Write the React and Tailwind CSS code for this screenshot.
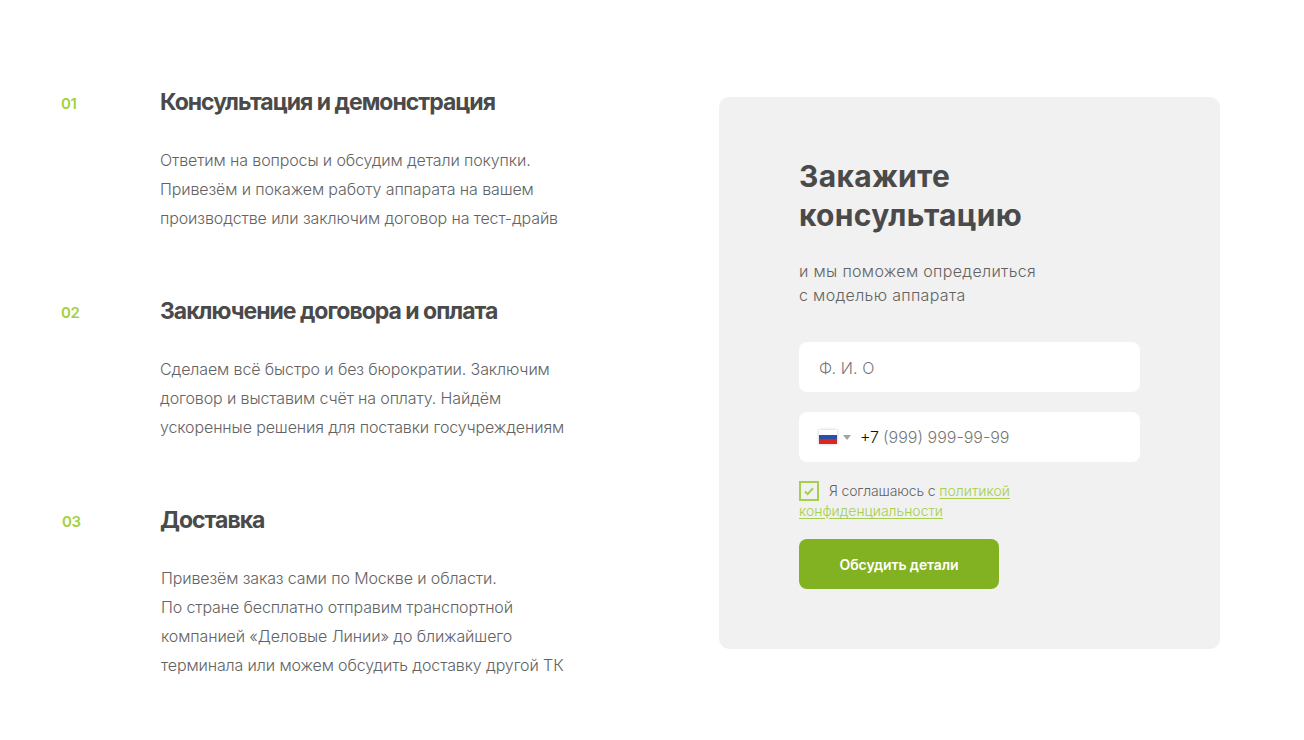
const STEPS = [
  {
    num: '01',
    numClass: 'w-[100px] pl-px',
    bodyClass: '',
    title: 'Консультация и демонстрация',
    lines: [
      'Ответим на вопросы и обсудим детали покупки.',
      'Привезём и покажем работу аппарата на вашем',
      'производстве или заключим договор на тест-драйв',
    ],
  },
  {
    num: '02',
    numClass: 'w-[100px] pl-px',
    bodyClass: '',
    title: 'Заключение договора и оплата',
    lines: [
      'Сделаем всё быстро и без бюрократии. Заключим',
      'договор и выставим счёт на оплату. Найдём',
      'ускоренные решения для поставки госучреждениям',
    ],
  },
  {
    num: '03',
    numClass: 'w-[100px] pl-[2px]',
    bodyClass: 'pl-px',
    title: 'Доставка',
    lines: [
      'Привезём заказ сами по Москве и области.',
      'По стране бесплатно отправим транспортной',
      'компанией «Деловые Линии» до ближайшего',
      'терминала или можем обсудить доставку другой ТК',
    ],
  },
];

function Step({ step }) {
  return (
    <div className="flex h-[209px]">
      <div className={`${step.numClass} shrink-0 pt-[6px] text-[15px] leading-[20px] font-semibold tracking-[-0.4px] text-[#a5d03d]`}>
        {step.num}
      </div>
      <div>
        <h3 className="text-[23px] leading-[28px] font-bold tracking-[-1px] text-[#4a4a4a]">{step.title}</h3>
        <div className={`${step.bodyClass} mt-[30px] text-[16px] leading-[29px] font-light tracking-[-0.12px] text-[#636363]`}>
          {step.lines.map(line => (
            <p key={line} className="whitespace-nowrap">{line}</p>
          ))}
        </div>
      </div>
    </div>
  );
}

function RuFlag() {
  return (
    <span className="flex h-[14px] w-[18px] flex-col shadow-[0_0_3px_rgba(0,0,0,0.25)]">
      <span className="h-[5px] bg-white" />
      <span className="h-[4px] bg-[#2a4fa8]" />
      <span className="h-[5px] bg-[#d8281f]" />
    </span>
  );
}

export default function App() {
  return (
    <div className="flex h-[740px] w-[1304px] items-start overflow-hidden bg-white pt-[88px] pl-[60px] font-['Inter',sans-serif]">
      <div className="w-[659px] shrink-0">
        {STEPS.map(s => (
          <Step key={s.num} step={s} />
        ))}
      </div>

      <div className="mt-[9px] h-[552px] w-[501px] shrink-0 rounded-[10px] bg-[#f1f1f1] px-[80px] pt-[60px]">
        <h2 className="text-[30px] leading-[39px] font-bold tracking-[0.3px] text-[#4a4a4a]">
          Закажите
          <br />
          консультацию
        </h2>
        <p className="mt-[24px] text-[16px] leading-[24px] font-light tracking-[0.33px] text-[#636363]">
          и мы поможем определиться
          <br />с моделью аппарата
        </p>

        <div className="mt-[35px] flex h-[50px] items-center rounded-[8px] bg-white px-[20px] pt-px text-[16px] font-light tracking-[0.1px] text-[#777777]">
          Ф. И. О
        </div>

        <div className="mt-[20px] flex h-[50px] items-center rounded-[8px] bg-white pl-[20px] text-[16px]">
          <RuFlag />
          <span className="ml-[6px] h-0 w-0 border-x-[4px] border-t-[5px] border-x-transparent border-t-[#a3a3a3]" />
          <span className="ml-[9px] font-light text-[#111111]">+7</span>
          <span className="ml-[4px] font-light text-[#777777]">(999) 999-99-99</span>
        </div>

        <div className="mt-[19px] w-[300px] text-[14px] leading-[20px] font-light text-[#636363]">
          <span className="mr-[10px] inline-flex h-[20px] w-[20px] items-center justify-center border-2 border-[#a5cf4c] align-top">
            <svg width="10" height="9" viewBox="0 0 10 9" fill="none">
              <path d="M1 4.5l2.6 2.6L9 1.2" stroke="#a5cf4c" strokeWidth="2" />
            </svg>
          </span>
          <span className="tracking-[-0.15px]">Я соглашаюсь с</span>{' '}
          <a className="text-[#a5cf4c] underline underline-offset-2">политикой конфиденциальности</a>
        </div>

        <button className="mt-[18px] block h-[50px] w-[200px] rounded-[8px] bg-[#82b222] text-[14px] font-semibold tracking-[-0.1px] text-white">
          Обсудить детали
        </button>
      </div>
    </div>
  );
}
